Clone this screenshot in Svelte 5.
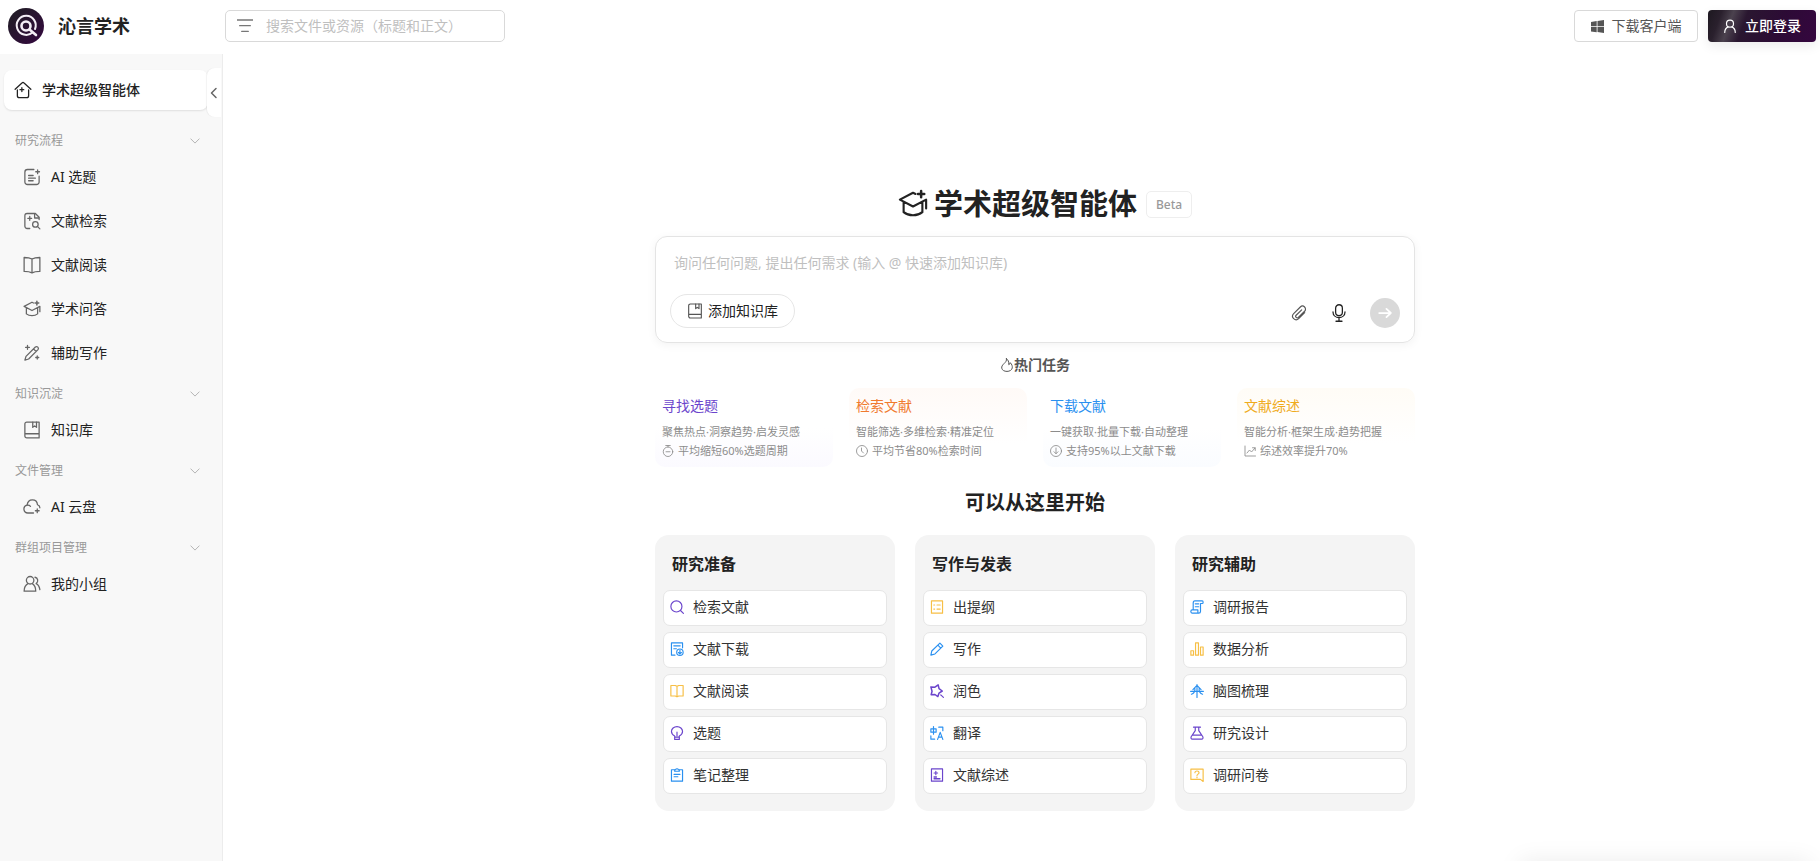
<script lang="ts">
	type Item = { label: string; icon: string; tone?: string };
	type Group = { title: string; items: Item[] };
	type Task = { title: string; desc: string; icon: string; stat: string; tone: string };

	let keyword = '';
	let question = '';
	let collapsed = false;

	// inner markup of the 24x24 line icons
	const icons: Record<string, string> = {
		home: '<path d="M1.5 11 10.6 2.6a2 2 0 0 1 2.8 0L22.5 11"/><path d="M4.5 12v7.5a2.6 2.6 0 0 0 2.6 2.6h9.8a2.6 2.6 0 0 0 2.6-2.6V12"/><path d="M10.5 9v5M8 11.5h5"/>',
		topic: '<path d="M14.5 2H6a3.5 3.5 0 0 0-3.500 3.500v13A3.500 3.500 0 0 0 6 22h12a3.500 3.500 0 0 0 3.500-3.500V11"/><path d="M19.500 2.500v5M17 5h5M7.500 10h6M7.500 13.500h9M7.500 17h6"/>',
		searchDoc: '<path d="M9 22H5.500A3 3 0 0 1 2.500 19V5a3 3 0 0 1 3-3h11l5 5v3"/><path d="M15.500 2.500V8h5.500"/><path d="M9 6v5M6.500 8.500h5"/><circle cx="16.500" cy="16.500" r="3.700"/><path d="m19.500 19.500 3 3"/>',
		book: '<path d="M12 4C9 2.300 5 2 1.500 2v18.500c4 0 7.500.3 10.500 2 3-1.700 6.500-2 10.500-2V2C19 2 15 2.300 12 4zM12 4v18.500"/>',
		cap: '<path d="m14 4-2-1L1.500 8.500 12 14 22.500 8.500v7M4.500 10.500v8c4 3.300 11 3.300 15 0v-8"/><path d="M18.500 1.500v5M16 4h5" stroke-width="2"/>',
		wand: '<path d="M2.500 21.500 4 16.500 16.500 4a2.500 2.500 0 0 1 3.500 3.500L7.500 20zM14 6.500l3.500 3.500"/><path d="M6 2v5M3.500 4.500h5M19 16v4M17 18h4"/>',
		notebook: '<path d="M5 1.500h16.500v21H5a2.500 2.500 0 0 1-2.500-2.500V4A2.500 2.500 0 0 1 5 1.500zM2.500 17h19"/><path d="M13 1.500v7l2.500-2 2.500 2v-7"/>',
		cloud: '<path d="M14 20H6.500a5.300 5.300 0 0 1-1-10.500C6 5 9 2.500 12.500 2.500c4 0 6.500 3 6.800 6.500 1.800.6 3.200 2 3.200 4"/><path d="M5.500 9.500c1.800-.3 3.500.4 4.500 1.600"/><path d="M19 14.500v5M16.500 17h5"/>',
		users: '<circle cx="9.500" cy="7" r="5"/><path d="M6.500 11.500C3 13.500 1.500 17 1.500 21.500h15.500c0-4.500-1.500-8-4.500-10"/><path d="M16 3c4 .5 5 6 1.500 8.500 3 1.500 4.500 4.500 5 8"/>',
		user: '<circle cx="12" cy="8" r="6"/><path d="M3 23c0-5 2.500-8 6-9.500M21 23c0-5-2.500-8-6-9.500"/>',
		chevron: '<path d="m2 7 10 10L22 7"/>',
		left: '<path d="m16 3-9 9 9 9"/>',
		menu: '<path d="M0 3h24M4 11.500h16M7 20h10"/>',
		clip: '<path d="m20.500 11.500-9 9a5.300 5.300 0 0 1-7.500-7.500l10-10a4.500 4.500 0 0 1 6.400 6.400l-9.400 9.300a2.300 2.300 0 0 1-3.300-3.300L16 7.200"/>',
		mic: '<rect x="7.500" y="1" width="9" height="14.500" rx="4.500"/><path d="M4 10.500c0 10 16 10 16 0M12 18v5M8 23h8"/>',
		arrow: '<path d="M2 12h20M14.500 5l7.500 7-7.500 7"/>',
		fire: '<path d="M11 1c1 4-1.500 6-4 8.500C4 12.500 2.500 14.500 3 17.500c.7 3.500 4.500 5.500 9 5.500s8.500-2.500 9-6c.4-3-.5-6-3.500-9-.2 2-1 3-2.500 3.500C15.500 6.500 14 3 11 1z"/>',
		timer: '<circle cx="12" cy="13.500" r="9.500"/><path d="M7.500 1h9M12 1v3M8 13.500h8"/>',
		clock: '<circle cx="12" cy="12" r="11"/><path d="M11 6v6l4 4"/>',
		down: '<circle cx="12" cy="12" r="11"/><path d="M12 6v11M8 13.500l4 4 4-4"/>',
		trend: '<path d="M2 2v20h21M6 16l5-6 4 4 7-8M17 5.500h5.500V11"/>',
		search: '<circle cx="11" cy="11" r="9.500"/><path d="m18 18 5 5"/>',
		docDown: '<path d="M8.500 22.500H2.500v-21h19V10M6.500 6.500h11M6.500 11.500h4.500"/><circle cx="17" cy="17.500" r="5.500"/><path d="M17 14v6.500M14.500 18l2.500 2.500 2.500-2.500"/>',
		openBook: '<path d="M1.500 2.500H9l3 1.500 3-1.500h7.500v18H15L12 22l-3-1.500H1.500zM12 4v18"/>',
		bulb: '<path d="M8 19v-2C5 15.500 2.500 13 2.500 9.500a9.500 8.500 0 0 1 19 0c0 3.500-2.500 6-5.500 7.500v2zM8 19v4h8v-4M12 10.500v6"/>',
		note: '<path d="M7.500 3h-5v19.500h19V3h-5"/><path d="M8 5.500h8V3h-1.500a2.700 2.700 0 0 0-5 0H8zM7 11h10M7 15h6.500"/>',
		outline: '<rect x="2.500" y="1.500" width="19" height="21"/><path d="M6.500 8.500h1.500M12 8.500h5.500M6.500 15.500h1.500M12 15.500h5.500"/>',
		pencil: '<path d="m1.500 22.500 1.500-7L17 2l5 5L8.500 20.500zM13.500 5.500l5 5"/>',
		polish: '<path d="m14 1.500 1.500 6.500 5.500 4-5.500 3.500-2 6-5-3.500-6.500.5 1.500-6L1.500 5l7 .5z" stroke-width="2.600"/><path d="m18.500 18.500 4.500 4.500"/>',
		translate: '<path d="M1.500 5h9v5.500h-9zM6 1v13M15 2h7v6M1.500 17v5.500H8M13 23l4.500-12L22 23M14.500 19h6"/>',
		review: '<rect x="2.500" y="1.500" width="19" height="21"/><path d="M10 5.500v6M7 8.500h6"/><path d="M7 15.500h4M7 18.500h10" stroke-width="2.400"/>',
		report: '<path d="M5.500 17V5c0-2 1-3.500 3-3.500h12.500c2 0 2 4.500 0 4.500H18v13.500a3 3 0 0 1-3 3H4a2.700 2.700 0 0 1-2.500-3c0-1.500 1-2.500 2-2.500h10v5.500M9 6.500h6M9 11.500h6"/>',
		bars: '<path d="M1.500 15H6v7.500H1.500zM9.500 1.500h5v21h-5zM18 8.500h4.500v14H18z"/>',
		mind: '<path d="M12 1v22M5 9.500 12 2.500l7 7M1 12.500h22M8.500 8c0 5-1 8-6 9.500M15.500 8c0 5 1 8 6 9.500"/>',
		flask: '<path d="M6 2h12M9 2v6L2 18.500c-.8 2 0 4 2 4h16c2 0 2.800-2 2-4L15 8V2M5 15.500h14"/>',
		survey: '<path d="M1.500 2h21v21l-4.500-3.500H1.500zM8.500 8c0-4 7-3.500 7 0 0 2.500-3.500 2.500-3.500 5M12 15.500v1"/>'
	};

	const groups: Group[] = [
		{
			title: '研究流程',
			items: [
				{ label: 'AI 选题', icon: 'topic' },
				{ label: '文献检索', icon: 'searchDoc' },
				{ label: '文献阅读', icon: 'book' },
				{ label: '学术问答', icon: 'cap' },
				{ label: '辅助写作', icon: 'wand' }
			]
		},
		{ title: '知识沉淀', items: [{ label: '知识库', icon: 'notebook' }] },
		{ title: '文件管理', items: [{ label: 'AI 云盘', icon: 'cloud' }] },
		{ title: '群组项目管理', items: [{ label: '我的小组', icon: 'users' }] }
	];

	const tasks: Task[] = [
		{ title: '寻找选题', desc: '聚焦热点·洞察趋势·启发灵感', icon: 'timer', stat: '平均缩短60%选题周期', tone: 'purple' },
		{ title: '检索文献', desc: '智能筛选·多维检索·精准定位', icon: 'clock', stat: '平均节省80%检索时间', tone: 'orange' },
		{ title: '下载文献', desc: '一键获取·批量下载·自动整理', icon: 'down', stat: '支持95%以上文献下载', tone: 'blue' },
		{ title: '文献综述', desc: '智能分析·框架生成·趋势把握', icon: 'trend', stat: '综述效率提升70%', tone: 'yellow' }
	];

	const starters: Group[] = [
		{
			title: '研究准备',
			items: [
				{ label: '检索文献', icon: 'search', tone: 'purple' },
				{ label: '文献下载', icon: 'docDown', tone: 'blue' },
				{ label: '文献阅读', icon: 'openBook', tone: 'yellow' },
				{ label: '选题', icon: 'bulb', tone: 'purple' },
				{ label: '笔记整理', icon: 'note', tone: 'blue' }
			]
		},
		{
			title: '写作与发表',
			items: [
				{ label: '出提纲', icon: 'outline', tone: 'yellow' },
				{ label: '写作', icon: 'pencil', tone: 'blue' },
				{ label: '润色', icon: 'polish', tone: 'purple' },
				{ label: '翻译', icon: 'translate', tone: 'blue' },
				{ label: '文献综述', icon: 'review', tone: 'purple' }
			]
		},
		{
			title: '研究辅助',
			items: [
				{ label: '调研报告', icon: 'report', tone: 'blue' },
				{ label: '数据分析', icon: 'bars', tone: 'yellow' },
				{ label: '脑图梳理', icon: 'mind', tone: 'blue' },
				{ label: '研究设计', icon: 'flask', tone: 'purple' },
				{ label: '调研问卷', icon: 'survey', tone: 'yellow' }
			]
		}
	];
</script>

{#snippet icon(name, size)}
	<svg class="icon" width={size} height={size} viewBox="0 0 24 24" aria-hidden="true">
		{@html icons[name]}
	</svg>
{/snippet}

<div class="page">
	<header>
		<a class="brand" href="#home">
			<svg class="logo" viewBox="0 0 36 36" width="36" height="36" aria-hidden="true">
				<defs>
					<linearGradient id="logo-bg" x1="0" x2="1" y1="0" y2="1">
						<stop offset="0.2" stop-color="#231a29" />
						<stop offset="1" stop-color="#34083f" />
					</linearGradient>
				</defs>
				<circle cx="18" cy="18" r="18" fill="url(#logo-bg)" />
				<g fill="none" stroke="#f4eef6" stroke-linecap="round">
					<path d="M24.500 24.500A9.500 9.500 0 1 1 27 21" stroke-width="2" />
					<circle cx="18" cy="18" r="4.500" stroke-width="2.600" />
					<path d="m21.500 21.500 6.500 5.500" stroke-width="2.600" />
				</g>
			</svg>
			<strong>沁言学术</strong>
		</a>
		<label class="search">
			{@render icon('menu', 16)}
			<input type="text" bind:value={keyword} placeholder="搜索文件或资源（标题和正文）" aria-label="搜索" />
		</label>
		<div class="account">
			<button class="download">
				<svg viewBox="0 0 24 24" width="13" height="13" fill="currentColor" aria-hidden="true">
					<path d="M0 3.500 10.500 2v9.500H0zM12 1.800 24 0v11.500H12zM0 13h10.500v9.500L0 21zM12 13h12v11l-12-1.800z" />
				</svg>
				下载客户端
			</button>
			<button class="login">{@render icon('user', 14)}立即登录</button>
		</div>
	</header>

	<div class="body">
		<aside class:collapsed>
			<a class="current" href="#agent">{@render icon('home', 18)}学术超级智能体</a>
			<button class="fold" aria-label="收起" on:click={() => (collapsed = !collapsed)}>
				{@render icon('left', 12)}
			</button>
			<nav>
				{#each groups as group}
					<section>
						<h2>{group.title}{@render icon('chevron', 10)}</h2>
						{#each group.items as item}
							<a href="#{item.icon}">{@render icon(item.icon, 18)}{item.label}</a>
						{/each}
					</section>
				{/each}
			</nav>
		</aside>

		<main>
			<div class="content">
				<div class="title">
					{@render icon('cap', 30)}
					<h1>学术超级智能体</h1>
					<span class="beta">Beta</span>
				</div>

				<div class="ask">
					<textarea bind:value={question} aria-label="提问" placeholder="询问任何问题, 提出任何需求 (输入 @ 快速添加知识库)"></textarea>
					<div class="actions">
						<button class="add">{@render icon('notebook', 16)}添加知识库</button>
						<button class="tool clip" aria-label="附件">{@render icon('clip', 16)}</button>
						<button class="tool" aria-label="语音">{@render icon('mic', 18)}</button>
						<button class="send" aria-label="发送">{@render icon('arrow', 14)}</button>
					</div>
				</div>

				<h3 class="hot">{@render icon('fire', 14)}热门任务</h3>
				<div class="tasks">
					{#each tasks as task}
						<a class="task {task.tone}" href="#{task.icon}">
							<h4>{task.title}</h4>
							<p>{task.desc}</p>
							<p class="stat">{@render icon(task.icon, 12)}{task.stat}</p>
						</a>
					{/each}
				</div>

				<h2 class="start">可以从这里开始</h2>
				<div class="starters">
					{#each starters as card}
						<section class="card">
							<h3>{card.title}</h3>
							{#each card.items as item}
								<button class={item.tone}>{@render icon(item.icon, 14)}<span>{item.label}</span></button>
							{/each}
						</section>
					{/each}
				</div>
			</div>
		</main>
	</div>

	<div class="drawer"></div>
</div>

<style>
	:global(body) {
		background: #fff;
		color: #222;
		font-family: 'Noto Sans', 'Noto Sans CJK SC', sans-serif;
		font-size: 14px;
		line-height: 22px;
	}

	* {
		box-sizing: border-box;
	}

	h1, h2, h3, h4, p {
		margin: 0;
	}

	a {
		color: inherit;
		text-decoration: none;
	}

	button {
		align-items: center;
		background: #fff;
		border: 0;
		color: inherit;
		cursor: pointer;
		display: flex;
		font: inherit;
		padding: 0;
	}

	input,
	textarea {
		background: none;
		border: 0;
		font: inherit;
		outline: 0;
		padding: 0;
	}

	.icon {
		fill: none;
		flex-shrink: 0;
		stroke: currentColor;
		stroke-linecap: round;
		stroke-linejoin: round;
		stroke-width: 1.7;
	}

	.page {
		display: flex;
		flex-direction: column;
		min-height: 100vh;
	}

	/* top bar */
	header {
		align-items: center;
		display: flex;
		height: 54px;
		padding: 0 4px 2px 8px;
	}

	.brand {
		align-items: center;
		display: flex;
		font-size: 18px;
		gap: 14px;
		width: 217px;
	}

	.search {
		align-items: center;
		border: 1px solid #d9d9d9;
		border-radius: 5px;
		color: #777;
		display: flex;
		gap: 13px;
		height: 32px;
		padding: 0 11px;
		width: 280px;
	}

	.search .icon {
		stroke-width: 2;
	}

	.search input {
		flex: 1;
		min-width: 0;
	}

	::placeholder {
		color: #bfbfbf;
		opacity: 1;
	}

	.account {
		display: flex;
		gap: 10px;
		margin-left: auto;
	}

	.account button {
		border-radius: 4px;
		gap: 8px;
		height: 32px;
		justify-content: center;
	}

	.download {
		border: 1px solid #d9d9d9;
		color: #555;
		width: 124px;
	}

	.account .login {
		background: linear-gradient(110deg, #1d1820 0%, #2a202d 12%, #4b424e 22%, #2a1730 34%, #2c0b35 65%, #35063f 100%);
		box-shadow: 0 4px 12px rgba(0, 0, 0, 0.08);
		color: #fff;
		font-weight: 500;
		width: 108px;
	}

	.login .icon {
		stroke-width: 2;
	}

	/* side bar */
	.body {
		display: flex;
		flex: 1;
	}

	aside {
		background: #f8f8f8;
		border-right: 1px solid #ececec;
		flex-shrink: 0;
		padding: 16px 14px 16px 4px;
		position: relative;
		width: 223px;
	}

	.current {
		align-items: center;
		background: #fff;
		border-radius: 8px;
		box-shadow: 0 1px 2px rgba(0, 0, 0, 0.1);
		display: flex;
		font-weight: 500;
		gap: 10px;
		height: 40px;
		padding: 0 10px;
	}

	.fold {
		border-radius: 8px 0 0 8px;
		box-shadow: -1px 0 1px rgba(0, 0, 0, 0.05);
		color: #666;
		height: 49px;
		justify-content: center;
		position: absolute;
		right: 1px;
		top: 14px;
		width: 14px;
	}

	.fold .icon {
		stroke-width: 3;
	}

	nav {
		padding-top: 12px;
	}

	nav section {
		padding-top: 5px;
	}

	nav h2 {
		align-items: center;
		color: #999;
		display: flex;
		font-size: 12px;
		font-weight: 400;
		height: 28px;
		justify-content: space-between;
		padding: 0 8px 0 11px;
	}

	nav a {
		align-items: center;
		display: flex;
		gap: 10px;
		height: 44px;
		padding-left: 19px;
	}

	nav a .icon {
		color: #666;
	}

	/* main column */
	main {
		flex: 1;
		min-width: 0;
		padding: 134px 0 48px 27px;
	}

	.content {
		margin: 0 auto;
		max-width: 760px;
	}

	.title {
		align-items: center;
		display: flex;
		height: 32px;
		justify-content: center;
		padding-left: 20px;
	}

	.title h1 {
		font-size: 29px;
		line-height: 32px;
		margin: 0 9px 0 6px;
	}

	.beta {
		border: 1px solid #eee;
		border-radius: 5px;
		color: #999;
		font-size: 12px;
		font-weight: 500;
		line-height: 25px;
		padding: 0 9px;
	}

	.ask {
		border: 1px solid #e4e4e4;
		border-radius: 12px;
		box-shadow: 0 2px 10px rgba(0, 0, 0, 0.05);
		margin-top: 16px;
		padding: 15px 14px 14px;
	}

	.ask textarea {
		display: block;
		height: 42px;
		padding: 0 4px;
		resize: none;
		width: 100%;
	}

	.actions {
		align-items: flex-end;
		display: flex;
	}

	.add {
		border: 1px solid #e6e6e6;
		border-radius: 17px;
		gap: 5px;
		height: 34px;
		margin-right: auto;
		padding: 0 16px;
	}

	.add .icon {
		color: #555;
	}

	.tool {
		height: 30px;
		justify-content: center;
		width: 40px;
	}

	.clip {
		color: #555;
	}

	.send {
		background: #d9d9d9;
		border-radius: 50%;
		color: #fff;
		height: 30px;
		justify-content: center;
		margin-left: 11px;
		width: 30px;
	}

	.send .icon {
		stroke-width: 3;
	}

	.hot {
		align-items: center;
		color: #555;
		display: flex;
		font-size: 14px;
		font-weight: 600;
		justify-content: center;
		margin-top: 11px;
	}

	.tasks {
		display: grid;
		gap: 16px;
		grid-template-columns: repeat(4, 1fr);
		margin-top: 12px;
	}

	.task {
		border-radius: 10px;
		height: 79px;
		padding: 7px;
	}

	.task h4 {
		font-size: 14px;
		font-weight: 400;
		margin-bottom: 5px;
	}

	.task p {
		color: #8c8c8c;
		font-size: 11px;
		line-height: 19px;
		white-space: nowrap;
	}

	.task .stat {
		align-items: center;
		display: flex;
		gap: 4px;
	}

	.task.purple {
		background: linear-gradient(#fff 50%, #fbfaff);
	}

	.task.orange {
		background: linear-gradient(#fffaf7, #fff 70%);
	}

	.task.blue {
		background: linear-gradient(#fff 50%, #fafcff);
	}

	.task.yellow {
		background: linear-gradient(#fffcf6, #fff 70%);
	}

	.purple :is(h4, .icon) {
		color: #6b45cc;
	}

	.orange h4 {
		color: #f07a2e;
	}

	.blue :is(h4, .icon) {
		color: #2a90f0;
	}

	.yellow .icon {
		color: #f7bf45;
	}

	.yellow h4 {
		color: #efab1c;
	}

	.task .stat .icon {
		color: #8c8c8c;
	}

	.start {
		font-size: 20px;
		line-height: 30px;
		margin-top: 21px;
		text-align: center;
	}

	.starters {
		display: grid;
		gap: 20px;
		grid-template-columns: repeat(3, 1fr);
		margin-top: 17px;
	}

	.card {
		background: #f4f4f4;
		border-radius: 14px;
		display: flex;
		flex-direction: column;
		gap: 6px;
		padding: 18px 8px 17px;
	}

	.card h3 {
		font-size: 16px;
		font-weight: 600;
		line-height: 22px;
		margin-bottom: 9px;
		padding-left: 9px;
	}

	.card button {
		border: 1px solid #e6e6e6;
		border-radius: 7px;
		color: #333;
		gap: 9px;
		height: 36px;
		padding: 0 6px 2px;
	}

	.card .icon {
		stroke-width: 2;
	}

	/* panel parked below the window, only its shadow shows */
	.drawer {
		box-shadow: 0 0 24px rgba(0, 0, 0, 0.08);
		height: 40px;
		position: fixed;
		right: 10px;
		top: 100%;
		width: 290px;
	}
</style>
